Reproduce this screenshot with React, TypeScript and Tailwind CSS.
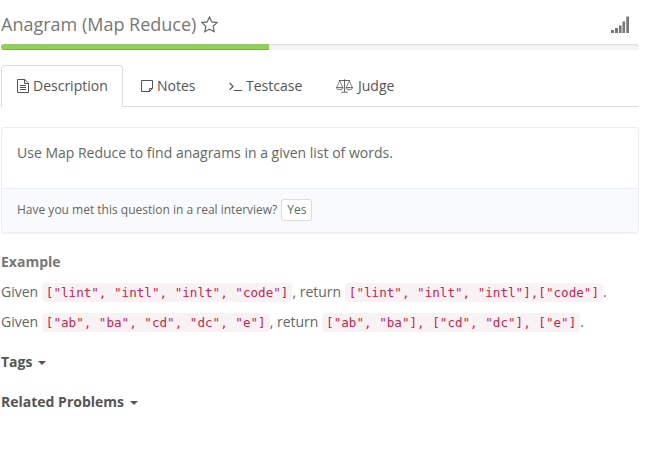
import type { ReactNode } from 'react';

function FileIcon() {
  return (
    <svg className="h-[14px] w-[12px]" viewBox="0 0 12 14" fill="none" stroke="currentColor">
      <path d="M.5.5h7.3l3.7 3.7v9.3H.5zM7.5.5v4h4" />
      <path d="M3 6.5h6M3 8.5h6M3 10.5h6" />
    </svg>
  );
}

function NoteIcon() {
  return (
    <svg className="h-[12px] w-[13px]" viewBox="0 0 13 12" fill="none" stroke="currentColor">
      <path d="M.5.5h11v8l-3 3h-8zM11.5 8.5h-3v3" />
    </svg>
  );
}

function TerminalIcon() {
  return (
    <svg className="mt-px h-[10px] w-[13px]" viewBox="0 0 13 10" fill="none" stroke="currentColor" strokeWidth="1.2">
      <path d="M.6 1l3.4 3.4L.6 7.8" />
      <path d="M5 8.5h8" strokeWidth="1" />
    </svg>
  );
}

function ScaleIcon() {
  return (
    <svg className="h-[14px] w-[17px]" viewBox="0 0 17 14" fill="none" stroke="currentColor" strokeWidth=".9">
      <path d="M2.8 1.5h11.4M8.5.3v12.5M5.4 13.2h6.2" />
      <path d="M3.7 2L.6 8.6M3.7 2l3.1 6.6M13.3 2l-3.1 6.6M13.3 2l3.1 6.6" strokeWidth=".7" />
      <path d="M.4 8.6h6.6c-.3 1.4-1.5 2.1-3.3 2.1S.7 10 .4 8.6zM10 8.6h6.6c-.3 1.4-1.5 2.1-3.3 2.1S10.3 10 10 8.6z" />
    </svg>
  );
}

function StarIcon() {
  return (
    <svg className="h-[17px] w-[17px] text-[#666]" viewBox="0 0 17 17" fill="none" stroke="currentColor" strokeWidth="1.2" strokeLinejoin="miter">
      <path d="M8.5 1l2.3 4.9 5.3.7-3.9 3.7 1 5.4-4.7-2.6-4.7 2.6 1-5.4L.9 6.6l5.3-.7z" />
    </svg>
  );
}

function SignalIcon() {
  return (
    <svg className="h-[17px] w-[18px]" viewBox="0 0 18 17" fill="#777">
      <path d="M0 14h3v3H0zM4 12h3v5H4zM8 9.5h2.6V17H8zM11.5 5.5h2.6V17h-2.6zM15.3.5H18V17h-2.7z" />
    </svg>
  );
}

function Tab({ icon, label, className }: { icon: ReactNode; label: string; className: string }) {
  return (
    <div className={`flex h-[42px] items-center text-[#555] ${className}`}>
      {icon}
      <span>{label}</span>
    </div>
  );
}

function Code({ children }: { children: ReactNode }) {
  return (
    <code className="rounded-[4px] bg-[#f9f2f4] px-1 py-0.5 font-['DejaVu_Sans_Mono',monospace] text-[12.6px] leading-none text-[#c7254e]">
      {children}
    </code>
  );
}

function Caret() {
  return <span className="mt-0.5 border-x-4 border-t-4 border-x-transparent border-t-[#555]" />;
}

export default function App() {
  return (
    <div className="h-[457px] overflow-hidden bg-white pr-[15px] pl-px font-['Open_Sans',sans-serif] text-[14px] leading-5 text-[#666]">
      <header className="flex h-[44px] items-center justify-between pt-1 pr-[10px]">
        <h1 className="flex items-center gap-[5px] text-[18px] leading-5 text-[#777]">
          Anagram (Map Reduce)
          <StarIcon />
        </h1>
        <SignalIcon />
      </header>
      <div className="h-[6px] overflow-hidden rounded-[4px] bg-[#f5f5f5] shadow-[inset_0_1px_2px_rgba(0,0,0,0.1)]">
        <div className="h-full w-[42%] bg-[#91cf5b] shadow-[inset_0_-1px_0_rgba(0,0,0,0.15)]" />
      </div>

      <nav className="mt-[15px] flex h-[42px] border-b border-[#ddd]">
        <Tab icon={<FileIcon />} label="Description" className="w-[122px] gap-1 rounded-t-[4px] border border-b-0 border-[#ddd] bg-white pb-px pl-[15px]" />
        <Tab icon={<NoteIcon />} label="Notes" className="ml-[18px] w-[88px] gap-[3px]" />
        <Tab icon={<TerminalIcon />} label="Testcase" className="w-[107px] gap-1" />
        <Tab icon={<ScaleIcon />} label="Judge" className="gap-[5px]" />
      </nav>

      <section className="mt-5 h-[106px] overflow-hidden rounded-[3px] border border-[#e9eef5] shadow-[0_1px_1px_rgba(0,0,0,0.05)]">
        <div className="h-[61px] border-b border-[#e9eef5] px-[15px] pt-[15px]">
          Use Map Reduce to find anagrams in a given list of words.
        </div>
        <div className="flex h-[43px] items-center gap-1 bg-[#f9fafc] pb-px pl-[15px] text-[12px]">
          <span>Have you met this question in a real interview?</span>
          <button className="h-[22px] rounded-[3px] border border-[#ddd] bg-white px-[5px] text-[12px] leading-[18px]">Yes</button>
        </div>
      </section>

      <section className="mt-[19px]">
        <h2 className="font-bold text-[#777]">Example</h2>
        <p className="mt-[10px] h-5">
          Given <Code>["lint", "intl", "inlt", "code"]</Code>, return <Code>["lint", "inlt", "intl"],["code"]</Code>.
        </p>
        <p className="mt-[10px] h-5">
          Given <Code>["ab", "ba", "cd", "dc", "e"]</Code>, return <Code>["ab", "ba"], ["cd", "dc"], ["e"]</Code>.
        </p>
      </section>
      <h2 className="mt-5 flex items-center gap-[6px] font-bold text-[#555]">Tags <Caret /></h2>
      <h2 className="mt-5 flex items-center gap-[6px] font-bold text-[#555]">Related Problems <Caret /></h2>
    </div>
  );
}
